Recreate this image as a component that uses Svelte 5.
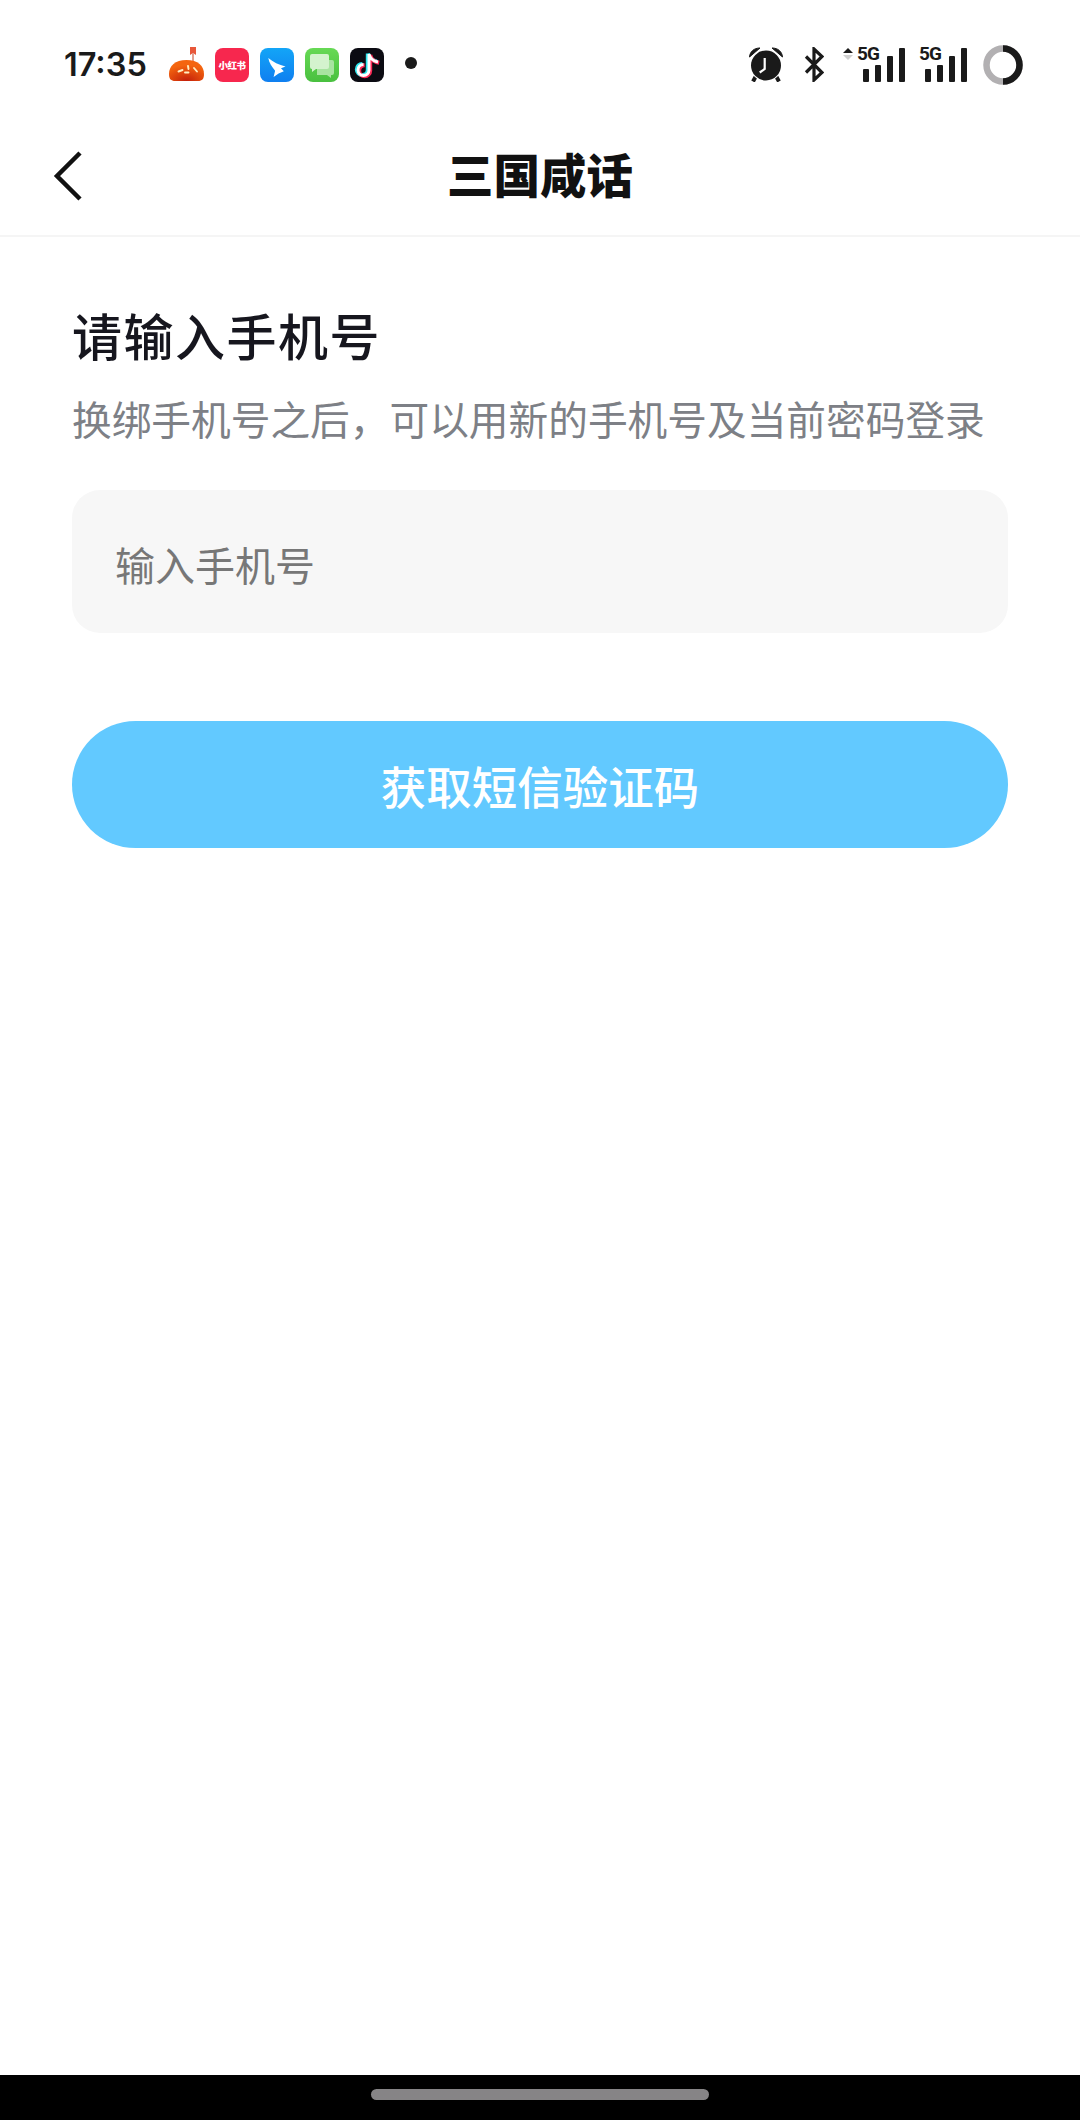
<script>
  const bars = [13, 17, 26, 34];
</script>

<div class="page">
  <div class="status">
    <span class="time">17:35</span>
    <div class="apps">
      <svg class="app pumpkin" viewBox="0 0 35 35" aria-hidden="true">
        <defs>
          <radialGradient id="pm" cx="0.5" cy="1" r="0.75"><stop offset="0" stop-color="#c41f0a"/><stop offset="1" stop-color="#f4650f"/></radialGradient>
        </defs>
        <path d="M21 0h6v8l-3-2-3 2z" fill="#e8573a"/>
        <rect x="23" y="6" width="2" height="8" fill="#e2a090"/>
        <path d="M0 27C0 19 6 13 17.500 13S35 19 35 27c0 5-2 7-6 7H6c-4 0-6-2-6-7z" fill="url(#pm)"/>
        <path d="M9.500 24.500l4-1.500M19 19l.5 3M25 21l3 3.500M16 25.500h3.500" stroke="#ffeec0" stroke-width="1.900" stroke-linecap="round" fill="none"/>
      </svg>
      <span class="app red"><span class="xhs">小红书</span></span>
      <span class="app blue">
        <svg viewBox="0 0 34 34" aria-hidden="true"><path d="M8.300 10C13 14 19 17 25.500 18.500L21 20.200l2.800 3-5.200 2.200-5 3.600 1.500-6.300C12 19 9 15 8.300 10z" fill="#fff"/></svg>
      </span>
      <span class="app green">
        <svg viewBox="0 0 34 34" aria-hidden="true"><path d="M12 12h15a2 2 0 0 1 2 2v11a2 2 0 0 1-2 2h-1v3l-4-3H12z" fill="#a8e4a0"/><path d="M7 6h15a2 2 0 0 1 2 2v11a2 2 0 0 1-2 2H11l-4 3v-3a2 2 0 0 1-2-2V8a2 2 0 0 1 2-2z" fill="#d4f3ce"/></svg>
      </span>
      <span class="app black">
        <svg viewBox="0 0 34 34" aria-hidden="true">
          <path d="M19 6v16a5.500 5.500 0 1 1-5.500-5.500M19 6c1 5 4 7 9 8" fill="none" stroke="#2ee6ee" stroke-width="4" transform="translate(-1.200 -.6)"/>
          <path d="M19 6v16a5.500 5.500 0 1 1-5.500-5.500M19 6c1 5 4 7 9 8" fill="none" stroke="#fb2a56" stroke-width="4" transform="translate(1.200 .8)"/>
          <path d="M19 6v16a5.500 5.500 0 1 1-5.500-5.500M19 6c1 5 4 7 9 8" fill="none" stroke="#fff" stroke-width="3"/>
        </svg>
      </span>
      <span class="dot"></span>
    </div>
    <div class="sys">
      <svg class="alarm" viewBox="0 0 34 35" aria-hidden="true">
        <path d="M.5 10C1 4.500 5 1 11 1zM33.500 10C33 4.500 29 1 23 1z" fill="#1a1a1a" stroke="#1a1a1a" stroke-linejoin="round"/>
        <path d="M7 29l-3 5.500M27 29l3 5.500" stroke="#1a1a1a" stroke-width="4"/>
        <circle cx="17" cy="18.500" r="16" fill="#fff"/>
        <circle cx="17" cy="18.500" r="15" fill="#1a1a1a"/>
        <path d="M15.700 11v11l-5 3.500" fill="none" stroke="#fff" stroke-width="2.200"/>
      </svg>
      <svg class="bt" viewBox="0 0 20 35" aria-hidden="true">
        <path d="M2 9.500l16 16-8 7.500V2l8 7.500-16 16" fill="none" stroke="#1a1a1a" stroke-width="3.200"/>
      </svg>
      <span class="arrows"><i class="up"></i><i class="down"></i></span>
      <div class="sig">
        <span class="five">5G</span>
        <span class="bars">{#each bars as h}<i style="height:{h}px"></i>{/each}</span>
      </div>
      <div class="sig second">
        <span class="five">5G</span>
        <span class="bars">{#each bars as h}<i style="height:{h}px"></i>{/each}</span>
      </div>
      <svg class="ring" viewBox="0 0 40 40" aria-hidden="true">
        <circle cx="20" cy="20" r="16.500" fill="none" stroke="#b2b0b2" stroke-width="6.500"/>
        <path d="M20 3.500a16.500 16.500 0 0 1 0 33" fill="none" stroke="#1a1a1a" stroke-width="6.500"/>
      </svg>
    </div>
  </div>

  <header class="nav">
    <svg class="back" viewBox="0 0 30 50" aria-hidden="true">
      <path d="M27 2L4 25l23 23" fill="none" stroke="#111" stroke-width="4.500"/>
    </svg>
    <h1>三国咸话</h1>
  </header>

  <main class="content">
    <h2>请输入手机号</h2>
    <p>换绑手机号之后，可以用新的手机号及当前密码登录</p>
    <div class="field">输入手机号</div>
    <button type="button">获取短信验证码</button>
  </main>

  <footer class="navbar"><span class="handle"></span></footer>
</div>

<style>
  :global(body) { margin: 0; background: #fff; }
  .page {
    width: 1080px;
    height: 2120px;
    display: flex;
    flex-direction: column;
    background: #fff;
    font-family: "Noto Sans CJK SC", "Noto Sans", sans-serif;
    overflow: hidden;
  }
  .status {
    height: 116px;
    box-sizing: border-box;
    padding: 13px 57px 0 64px;
    display: flex;
    align-items: center;
    flex: none;
  }
  .time {
    font-family: Inter, Roboto, sans-serif;
    font-weight: 600;
    font-size: 32.500px;
    color: #1a1a1a;
    width: 105px;
    margin-top: -1px;
  }
  .apps { display: flex; align-items: center; gap: 11px; }
  .app {
    width: 34px;
    height: 34px;
    border-radius: 8px;
    display: flex;
    align-items: center;
    justify-content: center;
    flex: none;
    overflow: hidden;
  }
  .app svg { width: 34px; height: 34px; }
  svg.pumpkin { border-radius: 0; width: 35px; height: 35px; }
  .red { background: #f7274e; }
  .blue { background: linear-gradient(#13a5f7, #0f7ff0); }
  .green { background: linear-gradient(#67d955, #49c03f); }
  .black { background: #0b0b12; }
  .xhs { color: #fff; font-size: 9.500px; font-weight: 900; white-space: nowrap; letter-spacing: -0.500px; }
  .dot { width: 12px; height: 12px; border-radius: 50%; background: #1a1a1a; margin: -3px 0 0 10px; }
  .sys { margin-left: auto; display: flex; align-items: center; }
  .alarm { width: 34px; height: 35px; margin-right: 21px; }
  .bt { width: 20px; height: 35px; margin-right: 19px; }
  .arrows { display: flex; flex-direction: column; gap: 2px; width: 10px; margin: -22px 5px 0 0; }
  .up, .down { display: block; width: 0; height: 0; border-left: 5px solid transparent; border-right: 5px solid transparent; }
  .up { border-bottom: 5px solid #1a1a1a; }
  .down { border-top: 5px solid #d0d0d0; }
  .sig { position: relative; width: 47px; height: 35px; }
  .sig.second { margin-left: 15px; }
  .five {
    position: absolute;
    left: -1px;
    top: 0;
    font-family: Roboto, sans-serif;
    font-weight: 700;
    font-size: 19px;
    line-height: 14px;
    color: #1a1a1a;
    letter-spacing: -0.800px;
  }
  .bars { position: absolute; right: 0; bottom: 0; display: flex; align-items: flex-end; gap: 6px; }
  .bars i { display: block; width: 6px; background: #1a1a1a; border-radius: 1px; }
  .ring { width: 40px; height: 40px; margin-left: 16px; }

  .nav {
    height: 121px;
    box-sizing: border-box;
    flex: none;
    display: flex;
    align-items: center;
    justify-content: center;
    position: relative;
    border-bottom: 2px solid #f5f5f5;
  }
  .back { position: absolute; left: 53px; top: 35px; width: 30px; height: 50px; }
  h1 { margin: 0 0 6px; font-size: 46.500px; font-weight: 900; color: #111; }

  .content { flex: 1; padding: 0 72px; display: flex; flex-direction: column; }
  h2 { margin: 66px 0 0; font-size: 50px; line-height: 62px; font-weight: 500; color: #16161e; letter-spacing: 1.500px; }
  p { margin: 27px 0 0; font-size: 39.700px; line-height: 52px; color: #7d8086; white-space: nowrap; }
  .field {
    margin-top: 46px;
    height: 143px;
    border-radius: 28px;
    background: #f7f7f7;
    box-sizing: border-box;
    padding-left: 43px;
    padding-top: 4px;
    display: flex;
    align-items: center;
    font-size: 40px;
    color: #777;
  }
  button {
    margin-top: 88px;
    height: 127px;
    border: 0;
    border-radius: 64px;
    background: #62c9ff;
    color: #fff;
    font-family: inherit;
    font-size: 45.500px;
    font-weight: 500;
    padding: 0;
  }
  .navbar {
    height: 45px;
    flex: none;
    box-sizing: border-box;
    padding-top: 14px;
    background: #000;
    display: flex;
    align-items: flex-start;
    justify-content: center;
  }
  .handle { width: 338px; height: 11px; border-radius: 6px; background: #868486; }
</style>
